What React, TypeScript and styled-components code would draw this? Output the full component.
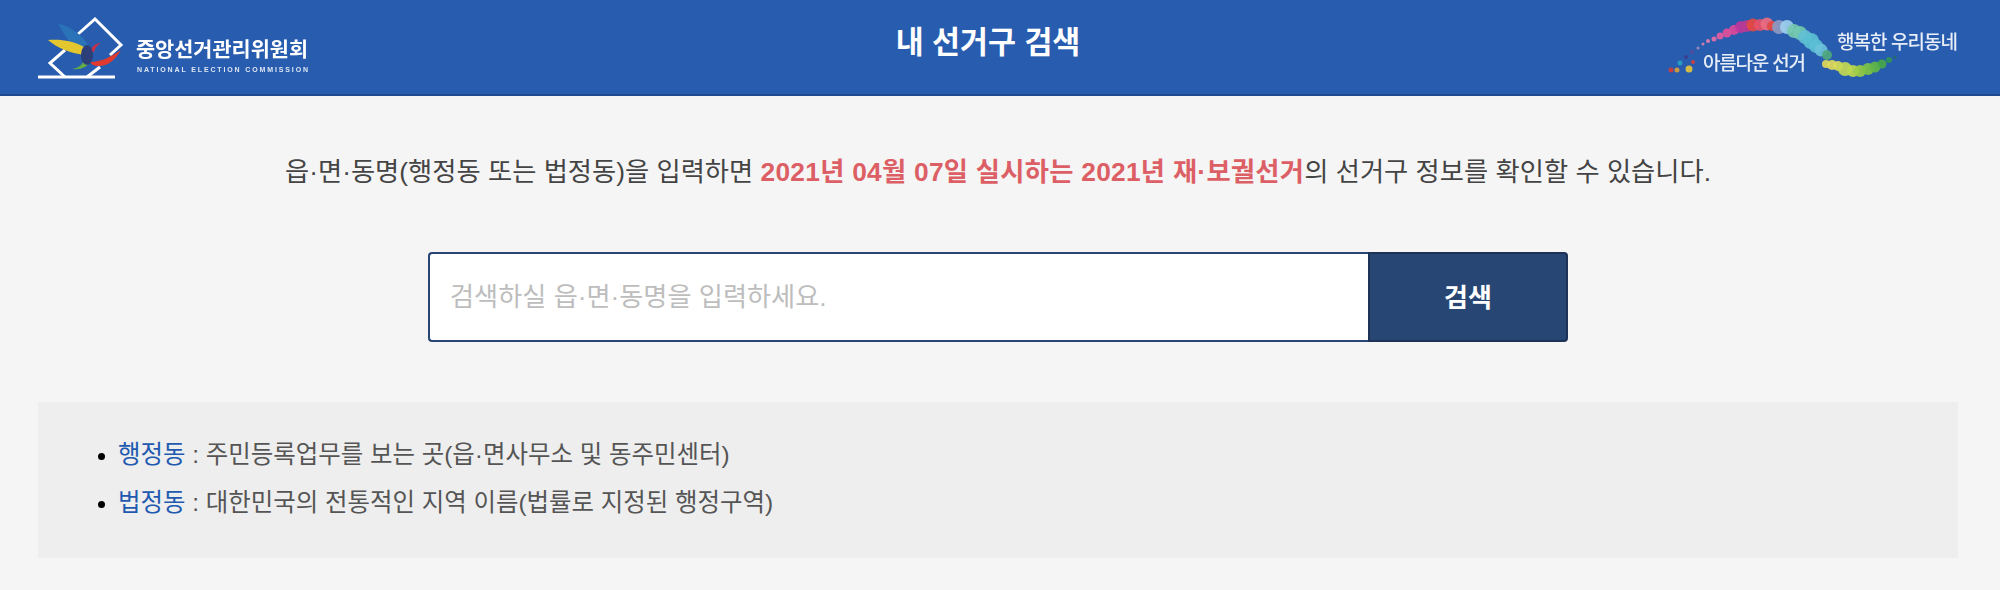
import React from 'react';
import styled, { createGlobalStyle } from 'styled-components';

const GlobalStyle = createGlobalStyle`
  html, body {
    margin: 0;
    padding: 0;
    background: #f5f5f5;
    font-family: "Liberation Sans", "Noto Sans CJK KR", sans-serif;
  }
  * { box-sizing: border-box; }
`;

const Page = styled.div`
  width: 2000px;
  height: 590px;
  overflow: hidden;
  background: #f5f5f5;
`;

const Header = styled.header`
  height: 96px;
  background: #285cae;
  border-bottom: 2px solid #20498f;
  display: flex;
  align-items: center;
  justify-content: space-between;
  padding: 0 35px 0 38px;
`;

const Title = styled.h1`
  margin: 0 7px 10px 0;
  font-size: 30.4px;
  line-height: 40px;
  font-weight: 700;
  color: #fff;
`;

const LogoSvg = styled.svg`
  display: block;
  flex: none;
  filter: blur(0.6px);
`;

const Main = styled.main`
  width: 1996px;
`;

const Intro = styled.p`
  margin: 0;
  padding-top: 58px;
  text-align: center;
  font-size: 26.3px;
  line-height: 36px;
  color: #444;
`;

const Highlight = styled.strong`
  font-weight: 700;
  letter-spacing: 0.27px;
  color: #dd5f66;
`;

const SearchForm = styled.form`
  display: flex;
  width: 1140px;
  height: 90px;
  margin: 62px auto 0;
`;

const SearchInput = styled.input`
  flex: 1;
  min-width: 0;
  height: 100%;
  padding: 0 0 0 20px;
  background: #fff;
  border: 2px solid #284674;
  border-right: 0;
  border-radius: 4px 0 0 4px;
  outline: none;
  font-family: inherit;
  font-size: 26.2px;
  color: #333;

  &::placeholder {
    color: #bdbdbd;
    opacity: 1;
  }
`;

const SearchButton = styled.button`
  flex: none;
  width: 200px;
  height: 100%;
  padding: 0 0 3px;
  background: #284674;
  border: 2px solid #1c3256;
  border-radius: 0 4px 4px 0;
  font-family: inherit;
  font-size: 26px;
  font-weight: 700;
  color: #fff;
`;

const InfoPanel = styled.section`
  height: 156px;
  margin: 60px 42px 0 38px;
  padding: 29px 0 0 60px;
  background: #eee;
`;

const InfoList = styled.ul`
  margin: 0;
  padding: 0 0 0 20px;
`;

const InfoItem = styled.li`
  font-size: 24.45px;
  line-height: 48px;
  color: #555;

  &::marker {
    color: #000;
    font-size: 22px;
  }
`;

const Term = styled.span`
  color: #1f5ab0;
`;

type Dot = [number, number, number, string];

const SWOOSH_DOTS: Dot[] = [
  [1671, 70, 2.5, '#d23b3b'], [1677, 70, 2.5, '#d8a03a'], [1680, 63, 2.5, '#27a3c4'],
  [1686, 57, 2, '#3c3c88'], [1689, 69, 3.5, '#e8c53a'], [1693, 62, 2, '#d83c3c'],
  [1692, 52, 2, '#5a4aa0'], [1698, 48, 1.5, '#a78ab8'], [1703, 44, 1.5, '#e57fae'],
  [1708, 41, 2, '#e57fae'], [1714, 39, 2.5, '#ea6fa6'], [1720, 36, 3.5, '#e85b9e'],
  [1727, 33, 4.5, '#e64f98'], [1734, 30, 5, '#e2489a'], [1741, 27, 6, '#c0379a'],
  [1747, 26, 6, '#b83a92'], [1753, 25, 6.5, '#e8483f'], [1760, 25, 6, '#e8526a'],
  [1767, 24, 6.5, '#ee6d80'], [1772, 26, 5, '#e2473f'], [1779, 27, 7, '#8f9bc2'],
  [1787, 27, 7, '#9fd0ee'], [1794, 31, 7, '#76c8ae'], [1800, 33, 7, '#72c8b0'],
  [1805, 37, 7, '#62c0d4'], [1811, 41, 8, '#5cc0d4'], [1816, 46, 7, '#5cbfd4'],
  [1821, 50, 6.5, '#6cc2da'], [1827, 55, 5, '#4fa87c'],
];

const TAIL_DOTS: Dot[] = [
  [1826, 64, 4, '#e2da5a'], [1832, 65, 5, '#e2da5a'], [1838, 66, 5, '#d9dc58'],
  [1845, 69, 7, '#c8da52'], [1853, 71, 6, '#bcd94c'], [1860, 71, 6, '#9bce44'],
  [1868, 69, 6, '#7fc444'], [1875, 67, 5.5, '#62b844'], [1882, 64, 4.5, '#48a848'],
  [1889, 60, 3, '#2f9556'], [1895, 57, 1.5, '#216f5e'],
];

function ElectionMark() {
  return (
    <LogoSvg width="280" height="80" viewBox="38 7 280 80" role="img" aria-label="중앙선거관리위원회">
      <g fill="none" stroke="#fff" strokeWidth="3">
        <path d="M77 35 95 19l26 26-11 10" />
        <path d="M65 50 50 63l15 14" />
        <path d="M100 67 87 77" />
        <path d="M38 77h77" />
      </g>
      <path d="M58 23c12 4 24 11 30 22l-6 10c-10-8-18-20-24-32Z" fill="#2a73b8" />
      <path d="M48 40c13-1 26 1 36 7v8C70 53 57 48 48 40Z" fill="#e4c62f" />
      <path d="M72 69c7-1 11-5 13-10l5 3c-3 5-9 8-18 7Z" fill="#63ad45" />
      <path d="M90 62c11 0 21-5 31-12-6 11-15 17-24 16-3 0-6-2-7-4Z" fill="#e0392f" />
      <path d="M90 52c2-6 6-9 11-9-4 2-6 5-7 9Z" fill="#c8304a" />
      <ellipse cx="87" cy="55" rx="6" ry="10" fill="#2c3f78" />
      <text x="136" y="57" fontSize="20" fontWeight="700" fill="#fff" textLength="172" lengthAdjust="spacingAndGlyphs">중앙선거관리위원회</text>
      <text x="137" y="72" fontSize="7" fontWeight="700" fill="#dfe7f3" textLength="171" lengthAdjust="spacing">NATIONAL ELECTION COMMISSION</text>
    </LogoSvg>
  );
}

function SloganMark() {
  return (
    <LogoSvg width="300" height="80" viewBox="1665 7 300 80" role="img" aria-label="아름다운 선거 행복한 우리동네">
      {SWOOSH_DOTS.concat(TAIL_DOTS).map(([cx, cy, r, fill], i) => (
        <circle key={i} cx={cx} cy={cy} r={r} fill={fill} opacity="0.9" />
      ))}
      <text x="1703" y="70" fontSize="19" fontWeight="500" fill="#e6edf7" textLength="103">아름다운 선거</text>
      <text x="1837" y="49" fontSize="19" fontWeight="500" fill="#e6edf7" textLength="121">행복한 우리동네</text>
    </LogoSvg>
  );
}

export default function App() {
  return (
    <Page>
      <GlobalStyle />
      <Header>
        <ElectionMark />
        <Title>내 선거구 검색</Title>
        <SloganMark />
      </Header>
      <Main>
        <Intro>
          읍·면·동명(행정동 또는 법정동)을 입력하면 <Highlight>2021년 04월 07일 실시하는 2021년 재·보궐선거</Highlight>의 선거구 정보를 확인할 수 있습니다.
        </Intro>
        <SearchForm onSubmit={e => e.preventDefault()}>
          <SearchInput placeholder="검색하실 읍·면·동명을 입력하세요." />
          <SearchButton type="submit">검색</SearchButton>
        </SearchForm>
      </Main>
      <InfoPanel>
        <InfoList>
          <InfoItem><Term>행정동</Term> : 주민등록업무를 보는 곳(읍·면사무소 및 동주민센터)</InfoItem>
          <InfoItem><Term>법정동</Term> : 대한민국의 전통적인 지역 이름(법률로 지정된 행정구역)</InfoItem>
        </InfoList>
      </InfoPanel>
    </Page>
  );
}
